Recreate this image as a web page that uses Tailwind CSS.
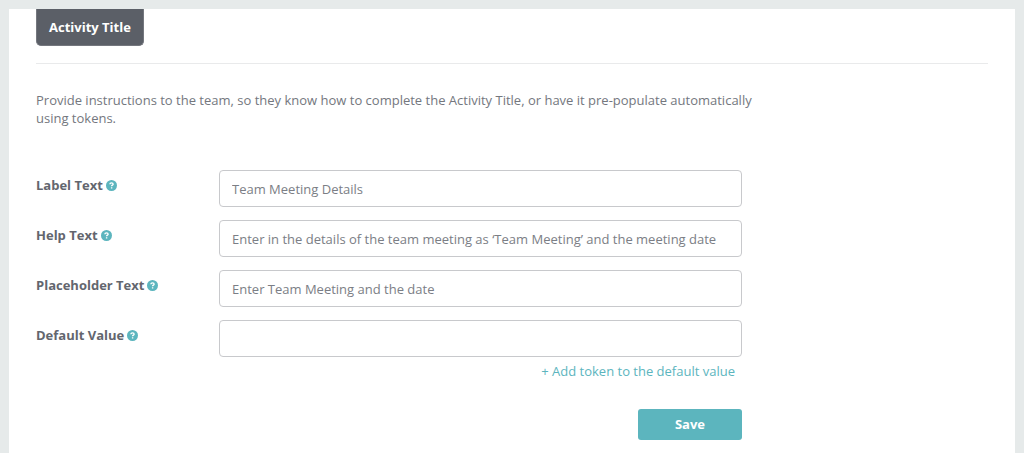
<!DOCTYPE html>
<html lang="en">
<head>
  <meta charset="UTF-8">
  <meta name="viewport" content="width=device-width, initial-scale=1.0">
  <title>Activity Title</title>
  <script src="https://cdn.jsdelivr.net/npm/@tailwindcss/browser@4"></script>
</head>
<body class="bg-[#e6eaea] px-[9px] pt-[9px] font-['Open_Sans',sans-serif] text-[13px] text-[#63666e]">
  <main class="min-h-screen bg-white px-[27px]">
    <div class="border-b border-[#e9eaeb] pb-[17px]">
      <h1 class="inline-block rounded-b-[5px] border border-t-0 border-[#74777e] bg-[#5b5f67] px-3 py-2 align-top leading-5 font-bold text-white">Activity Title</h1>
    </div>

    <form class="pt-[27px]">
      <p class="mb-[43px] max-w-[730px] leading-[18px] text-[#74777e]">Provide instructions to the team, so they know how to complete the Activity Title, or have it pre-populate automatically using tokens.</p>

      <div class="grid max-w-[706px] grid-cols-[183px_1fr] gap-y-[13px]">
        <div class="flex items-start gap-[3px] pt-[5px] leading-5">
          <label for="label-text" class="font-bold">Label Text</label>
          <button type="button" aria-label="About label text" class="mt-[5px]">
            <svg class="size-[11px]" viewBox="0 0 11 11"><circle cx="5.5" cy="5.5" r="5.5" fill="#5cb5be"/><path d="M3.9 4.2C3.9 2.4 7.1 2.4 7.1 4.2C7.1 5.2 5.6 5.1 5.6 6.3M5.6 7.2V8.4" fill="none" stroke="#fff" stroke-width="1.4"/></svg>
          </button>
        </div>
        <input id="label-text" type="text" value="Team Meeting Details" class="h-[37px] w-full min-w-0 rounded-[4px] border border-[#c8c9cc] px-3 text-[#7b7e85] outline-none">

        <div class="flex items-start gap-[3px] pt-[5px] leading-5">
          <label for="help-text" class="font-bold">Help Text</label>
          <button type="button" aria-label="About help text" class="mt-[5px]">
            <svg class="size-[11px]" viewBox="0 0 11 11"><circle cx="5.5" cy="5.5" r="5.5" fill="#5cb5be"/><path d="M3.9 4.2C3.9 2.4 7.1 2.4 7.1 4.2C7.1 5.2 5.6 5.1 5.6 6.3M5.6 7.2V8.4" fill="none" stroke="#fff" stroke-width="1.4"/></svg>
          </button>
        </div>
        <input id="help-text" type="text" value="Enter in the details of the team meeting as ‘Team Meeting’ and the meeting date" class="h-[37px] w-full min-w-0 rounded-[4px] border border-[#c8c9cc] px-3 text-[#7b7e85] outline-none">

        <div class="flex items-start gap-[3px] pt-[5px] leading-5">
          <label for="placeholder-text" class="font-bold">Placeholder Text</label>
          <button type="button" aria-label="About placeholder text" class="mt-[5px]">
            <svg class="size-[11px]" viewBox="0 0 11 11"><circle cx="5.5" cy="5.5" r="5.5" fill="#5cb5be"/><path d="M3.9 4.2C3.9 2.4 7.1 2.4 7.1 4.2C7.1 5.2 5.6 5.1 5.6 6.3M5.6 7.2V8.4" fill="none" stroke="#fff" stroke-width="1.4"/></svg>
          </button>
        </div>
        <input id="placeholder-text" type="text" value="Enter Team Meeting and the date" class="h-[37px] w-full min-w-0 rounded-[4px] border border-[#c8c9cc] px-3 text-[#7b7e85] outline-none">

        <div class="flex items-start gap-[3px] pt-[5px] leading-5">
          <label for="default-value" class="font-bold">Default Value</label>
          <button type="button" aria-label="About default value" class="mt-[5px]">
            <svg class="size-[11px]" viewBox="0 0 11 11"><circle cx="5.5" cy="5.5" r="5.5" fill="#5cb5be"/><path d="M3.9 4.2C3.9 2.4 7.1 2.4 7.1 4.2C7.1 5.2 5.6 5.1 5.6 6.3M5.6 7.2V8.4" fill="none" stroke="#fff" stroke-width="1.4"/></svg>
          </button>
        </div>
        <input id="default-value" type="text" class="h-[37px] w-full min-w-0 rounded-[4px] border border-[#c8c9cc] px-3 text-[#7b7e85] outline-none">
      </div>

      <div class="flex max-w-[706px] flex-col items-end pt-1">
        <a href="#" class="mr-[7px] leading-5 text-[#5cb5be]">+ Add token to the default value</a>
        <button type="submit" class="mt-7 h-[31px] w-[104px] rounded-[3px] bg-[#5cb5be] font-bold text-white">Save</button>
      </div>
    </form>
  </main>
</body>
</html>
